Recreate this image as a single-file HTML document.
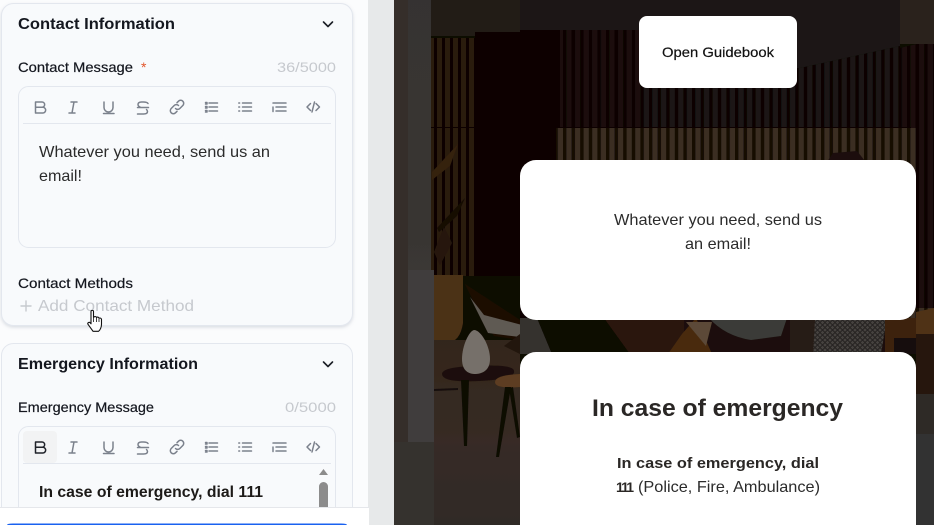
<!DOCTYPE html>
<html lang="en">
<head>
<meta charset="utf-8">
<title>Contact Information Editor</title>
<style>
html,body{margin:0;padding:0;width:934px;height:525px;overflow:hidden;background:#fff}
svg{display:block}
text{font-family:"Liberation Sans",sans-serif;white-space:pre}
.ti{font-size:16px;font-weight:700;fill:#14171f}
.lb{font-size:14px;fill:#14171f;stroke:#14171f;stroke-width:.2}
.ct{font-size:14px;fill:#c6c9ce}
.bd{font-size:16px;fill:#2b2b2b}
.ic{fill:none;stroke:#7b818c;stroke-width:1.5;stroke-linecap:round;stroke-linejoin:round}
</style>
</head>
<body>
<svg width="934" height="525" viewBox="0 0 934 525" xmlns="http://www.w3.org/2000/svg">
<defs>
<pattern id="s1" width="8.6" height="10" patternUnits="userSpaceOnUse" x="520">
<rect width="8.6" height="10" fill="#1a110b"/><rect x="0" width="3.4" height="10" fill="#070403"/>
</pattern>
<pattern id="s2" width="8.6" height="10" patternUnits="userSpaceOnUse" x="520">
<rect width="8.6" height="10" fill="#3a2d22"/><rect x="0" width="3.4" height="10" fill="#120b05"/>
</pattern>
<pattern id="s3" width="8.6" height="10" patternUnits="userSpaceOnUse" x="520">
<rect width="8.6" height="10" fill="#1a1613"/><rect x="0" width="3.4" height="10" fill="#090604"/>
</pattern>
<pattern id="s4" width="8" height="10" patternUnits="userSpaceOnUse" x="434">
<rect width="8" height="10" fill="#2a1a0d"/><rect x="0" width="3" height="10" fill="#0a0502"/>
</pattern>
<pattern id="kn" width="5" height="5" patternUnits="userSpaceOnUse">
<rect width="5" height="5" fill="#46423f"/><path d="M0 2.500L2.500 0L5 2.500L2.500 5Z" fill="none" stroke="#262220" stroke-width="1"/>
</pattern>
<linearGradient id="fl" x1="0" y1="0" x2="0" y2="1"><stop offset="0" stop-color="#33261b"/><stop offset=".55" stop-color="#372c25"/><stop offset="1" stop-color="#2f2a27"/></linearGradient>
<linearGradient id="col" x1="0" y1="0" x2="0" y2="1"><stop offset="0" stop-color="#363331"/><stop offset=".55" stop-color="#393633"/><stop offset="1" stop-color="#42403e"/></linearGradient>
<filter id="sh" x="-5%" y="-5%" width="110%" height="110%"><feDropShadow dx="0" dy="1.500" stdDeviation="1.500" flood-color="#8a94a6" flood-opacity=".3"/></filter>
<filter id="bl" x="0" y="0" width="100%" height="100%"><feGaussianBlur stdDeviation=".35"/></filter>
</defs>

<!-- page -->
<rect width="934" height="525" fill="#fbfcfd"/>
<rect x="368" y="0" width="26" height="525" fill="#e7e9ea"/>

<!-- photo -->
<g filter="url(#bl)">
<rect x="394" y="0" width="540" height="525" fill="#0c0704"/>
<rect x="431" y="0" width="503" height="36" fill="#241a13"/>
<rect x="431" y="38" width="44" height="240" fill="url(#s4)"/>
<rect x="475" y="32" width="45" height="250" fill="#090402"/>
<rect x="520" y="0" width="400" height="32" fill="#1a1512"/>
<path d="M520 30H640V128H520Z" fill="#090402"/>
<path d="M560 30H640V128H560Z" fill="url(#s1)"/>
<path d="M640 30H900V46L800 68L640 72Z" fill="#1a1613"/>
<path d="M640 72L800 68L900 46V128H640Z" fill="url(#s3)"/>
<rect x="520" y="128" width="414" height="192" fill="url(#s2)"/>
<rect x="520" y="128" width="36" height="192" fill="#0b0502"/>
<path d="M900 48L934 40V128H900Z" fill="url(#s1)"/>
<rect x="900" y="0" width="34" height="44" fill="#2a211b"/>
<rect x="431" y="127" width="480" height="1" fill="#0a0503"/>
<path d="M825 165l8-12 24-2 8 10-4 6z" fill="#1a100a"/>
<!-- leaves -->
<path d="M432 172l26-28-8 22-18 14z" fill="#35200f"/>
<path d="M437 228l28-30-8 18-18 16z" fill="#130b06"/>
<path d="M434 252l10-25 8 16-12 22z" fill="#26170b"/>
<!-- lower left -->
<rect x="431" y="276" width="89" height="70" fill="#100804"/>
<path d="M434 275h29v48q-3 19-15 19h-14z" fill="#4c3018"/>
<path d="M394 340H520V525H394Z" fill="url(#fl)"/>
<!-- chair left -->
<path d="M465 284l55 36v20l-26-4q-16-24-29-52z" fill="#1e0f06"/>
<path d="M470 297l18 36 32 4 2-12-38-10z" fill="#5f5a52"/>
<path d="M504 346l16-12v20z" fill="#201209"/>
<!-- vase and tables -->
<path d="M442 374q0-7 32-8 40-2 40 5 2 8-34 10-38 2-38-7z" fill="#1d100a"/>
<path d="M474 330c-5 1-12 16-12 29s8 15 13 15 15-2 15-15-9-29-16-29z" fill="#76706a"/>
<path d="M495 382q0-7 25-8v13q-25 2-25-5z" fill="#5d3c20"/>
<path d="M461 380h8l-2 66h-3z" fill="#0e0906"/>
<path d="M505 387h6l-12 70h-3zM509 388l4-1 7 50-3 1z" fill="#0e0906"/>
<path d="M434 389l24-1v2l-24 1z" fill="#15100c"/>
<!-- column -->
<rect x="394" y="0" width="37" height="442" fill="url(#col)"/>
<rect x="394" y="0" width="14" height="442" fill="#342f2b"/>
<rect x="408" y="270" width="26" height="172" fill="#403e3c"/>
<rect x="394" y="442" width="40" height="83" fill="#34302d"/>
<!-- centre furniture between cards -->
<rect x="520" y="318" width="400" height="36" fill="#1a100a"/>
<path d="M520 318H537L552 354H520Z" fill="#35322f"/>
<path d="M537 318H604L630 354H552Z" fill="#0d0705"/>
<path d="M604 318h80v36h-54z" fill="#2b1708"/>
<path d="M682 334l14-16 16 36h-44z" fill="#4a2c10"/>
<path d="M686 322h26l-6 24z" fill="#5b4a38"/>
<path d="M709 318h78l-6 18-30 4q-26-4-42-22z" fill="#3a3a38"/>
<rect x="790" y="318" width="30" height="36" fill="#251a12"/>
<path d="M815 318h72l-6 36h-68z" fill="url(#kn)"/>
<path d="M885 318H934V352H885Z" fill="#3c2411"/>
<rect x="894" y="338" width="40" height="16" fill="#170e08"/>
<!-- right edge -->
<rect x="916" y="128" width="18" height="180" fill="url(#s1)"/>
<path d="M916 312l18-4v26h-18z" fill="#4f3318"/>
<rect x="916" y="334" width="18" height="60" fill="#25180f"/>
<rect x="916" y="394" width="18" height="40" fill="#2f2b28"/>
<rect x="916" y="434" width="18" height="91" fill="#323232"/>
</g>

<!-- preview cards -->
<rect x="639" y="16" width="158" height="72" rx="8" fill="#fff"/>
<text x="662" y="57" class="lb" style="fill:#111;stroke:#111" textLength="112" lengthAdjust="spacingAndGlyphs">Open Guidebook</text>
<rect x="520" y="160" width="396" height="160" rx="16" fill="#fff"/>
<text x="614" y="225" class="bd" textLength="208" lengthAdjust="spacingAndGlyphs">Whatever you need, send us</text>
<text x="685" y="249" class="bd" textLength="66" lengthAdjust="spacingAndGlyphs">an email!</text>
<rect x="520" y="352" width="396" height="190" rx="16" fill="#fff"/>
<text x="592" y="416" font-size="24" font-weight="700" fill="#2a2725" textLength="251" lengthAdjust="spacingAndGlyphs">In case of emergency</text>
<text x="617" y="468" font-size="15" font-weight="700" fill="#2a2725" textLength="202" lengthAdjust="spacingAndGlyphs">In case of emergency, dial</text>
<text x="616" y="492" font-size="14" font-weight="700" fill="#2a2725" letter-spacing="-1.900">111</text>
<text x="638" y="492" class="bd" textLength="182" lengthAdjust="spacingAndGlyphs">(Police, Fire, Ambulance)</text>

<!-- card 1 -->
<rect x="1.500" y="3.500" width="351" height="322" rx="12" fill="#f8fafc" stroke="#e3e7ee" filter="url(#sh)"/>
<text x="18" y="29" class="ti" textLength="157" lengthAdjust="spacingAndGlyphs">Contact Information</text>
<path d="M323.500 22l4.500 4.500 4.500-4.500" fill="none" stroke="#1c1f26" stroke-width="1.600" stroke-linecap="round" stroke-linejoin="round"/>
<text x="18" y="72" class="lb" textLength="115" lengthAdjust="spacingAndGlyphs">Contact Message</text>
<text x="141" y="72" font-size="14" fill="#e2552b">*</text>
<text x="277" y="72" class="ct" textLength="59" lengthAdjust="spacingAndGlyphs">36/5000</text>
<rect x="18.500" y="86.500" width="317" height="161" rx="10" fill="#f8fafc" stroke="#e3e7ee"/>
<rect x="23" y="123" width="308" height="1" fill="#e3e7ee"/>
<g class="ic">
<path d="M35.500 102h6.500a2.600 2.600 0 0 1 0 5.300h-6.500zM35.500 107.300h7.300a2.800 2.800 0 0 1 0 5.700h-7.300z"/>
<path d="M71 102h6M69 113h6M74 102l-2 11"/>
<path d="M104 102v5.500a4.500 4.500 0 0 0 9 0v-5.500M103.500 113.500h10.500"/>
<path d="M148 103.500q-1-1.500-4.500-1.500h-2q-3.500 0-3.500 2.500 0 2 3 3M137.500 107.500h11M146.500 109.500q1 1 1 2 0 2.500-4 2.500h-6"/>
<path d="M175.500 108.500a3 3 0 0 0 4.300 0l3-3a3 3 0 0 0-4.300-4.300l-1.500 1.500M178.500 105.500a3 3 0 0 0-4.300 0l-3 3a3 3 0 0 0 4.300 4.300l1.500-1.500"/>
<path d="M209 103h8.500M209 107h8.500M209 111h8.500M205.500 102.500h1.500v1.500h-1.500M205.500 106.500h1.500v1.500h-1.500M205.500 110.500h1.500v1.500h-1.500"/>
<path d="M242.500 103h9M242.500 107h9M242.500 111h9M238.800 103h.8M238.800 107h.8M238.800 111h.8"/>
<path d="M273 103h13M276 107h10M276 111h10M273 107v4.500"/>
<path d="M310.500 103.500l-3.500 3.500 3.500 3.500M316 103.500l3.500 3.500-3.500 3.500M314.500 102l-2.500 10"/>
</g>
<text x="39" y="157" class="bd" textLength="231" lengthAdjust="spacingAndGlyphs">Whatever you need, send us an</text>
<text x="39" y="181" class="bd" textLength="43" lengthAdjust="spacingAndGlyphs">email!</text>
<text x="18" y="288" class="lb" textLength="115" lengthAdjust="spacingAndGlyphs">Contact Methods</text>
<path d="M26 301v10M21 306h10" stroke="#c6c9ce" stroke-width="1.400" stroke-linecap="round"/>
<text x="38" y="311" font-size="16" fill="#c6c9ce" textLength="156" lengthAdjust="spacingAndGlyphs">Add Contact Method</text>
<!-- hand cursor -->
<path d="M91 311.500c0-1.500 2.500-1.500 2.500 0v6l.5-.5c1-.8 2.300-.3 2.500.5 1-.8 2.300-.3 2.500.8.900-.5 2.300-.2 2.500 1v5c0 3-1.500 6-3 7h-5.500c-1.200-1.700-3.500-5-5-7-.8-1.100.8-2.700 2.200-1.500l.8 1z" fill="#fff" stroke="#111" stroke-width="1.100" stroke-linejoin="round"/>
<path d="M93.500 318v4M96.500 318v4M99 319v3" stroke="#111" stroke-width=".8" fill="none"/>

<!-- card 2 -->
<rect x="1.500" y="343.500" width="351" height="200" rx="12" fill="#f8fafc" stroke="#e3e7ee"/>
<text x="18" y="369" class="ti" textLength="180" lengthAdjust="spacingAndGlyphs">Emergency Information</text>
<path d="M323.500 362l4.500 4.500 4.500-4.500" fill="none" stroke="#1c1f26" stroke-width="1.600" stroke-linecap="round" stroke-linejoin="round"/>
<text x="18" y="412" class="lb" textLength="136" lengthAdjust="spacingAndGlyphs">Emergency Message</text>
<text x="285" y="412" class="ct" textLength="51" lengthAdjust="spacingAndGlyphs">0/5000</text>
<rect x="18.500" y="426.500" width="317" height="120" rx="10" fill="#f8fafc" stroke="#e3e7ee"/>
<rect x="23" y="431" width="34" height="32" rx="4" fill="#f2f3f4"/>
<rect x="23" y="463" width="308" height="1" fill="#e3e7ee"/>
<path d="M35.500 442h6.500a2.600 2.600 0 0 1 0 5.300h-6.500zM35.500 447.300h7.300a2.800 2.800 0 0 1 0 5.700h-7.300z" fill="none" stroke="#1f2229" stroke-width="1.500" stroke-linejoin="round"/>
<g class="ic" transform="translate(0,340)">
<path d="M71 102h6M69 113h6M74 102l-2 11"/>
<path d="M104 102v5.500a4.500 4.500 0 0 0 9 0v-5.500M103.500 113.500h10.500"/>
<path d="M148 103.500q-1-1.500-4.500-1.500h-2q-3.500 0-3.500 2.500 0 2 3 3M137.500 107.500h11M146.500 109.500q1 1 1 2 0 2.500-4 2.500h-6"/>
<path d="M175.500 108.500a3 3 0 0 0 4.300 0l3-3a3 3 0 0 0-4.300-4.300l-1.500 1.500M178.500 105.500a3 3 0 0 0-4.300 0l-3 3a3 3 0 0 0 4.300 4.300l1.500-1.500"/>
<path d="M209 103h8.500M209 107h8.500M209 111h8.500M205.500 102.500h1.500v1.500h-1.500M205.500 106.500h1.500v1.500h-1.500M205.500 110.500h1.500v1.500h-1.500"/>
<path d="M242.500 103h9M242.500 107h9M242.500 111h9M238.800 103h.8M238.800 107h.8M238.800 111h.8"/>
<path d="M273 103h13M276 107h10M276 111h10M273 107v4.500"/>
<path d="M310.500 103.500l-3.500 3.500 3.500 3.500M316 103.500l3.500 3.500-3.500 3.500M314.500 102l-2.500 10"/>
</g>
<text x="39" y="497" font-size="16" font-weight="700" fill="#1c1a18" textLength="224" lengthAdjust="spacingAndGlyphs">In case of emergency, dial 111</text>
<path d="M323.500 469l4.500 6h-9z" fill="#8c8c8c"/>
<rect x="319" y="482" width="9" height="40" rx="4.500" fill="#8c8c8c"/>

<!-- bottom bar -->
<rect x="0" y="507" width="369" height="18" fill="#fff"/>
<rect x="0" y="507" width="369" height="1" fill="#e5e7eb"/>
<path d="M7 525q0-1.500 6-1.500h328q6 0 6 1.500z" fill="#1a62f0"/>
</svg>
</body>
</html>
